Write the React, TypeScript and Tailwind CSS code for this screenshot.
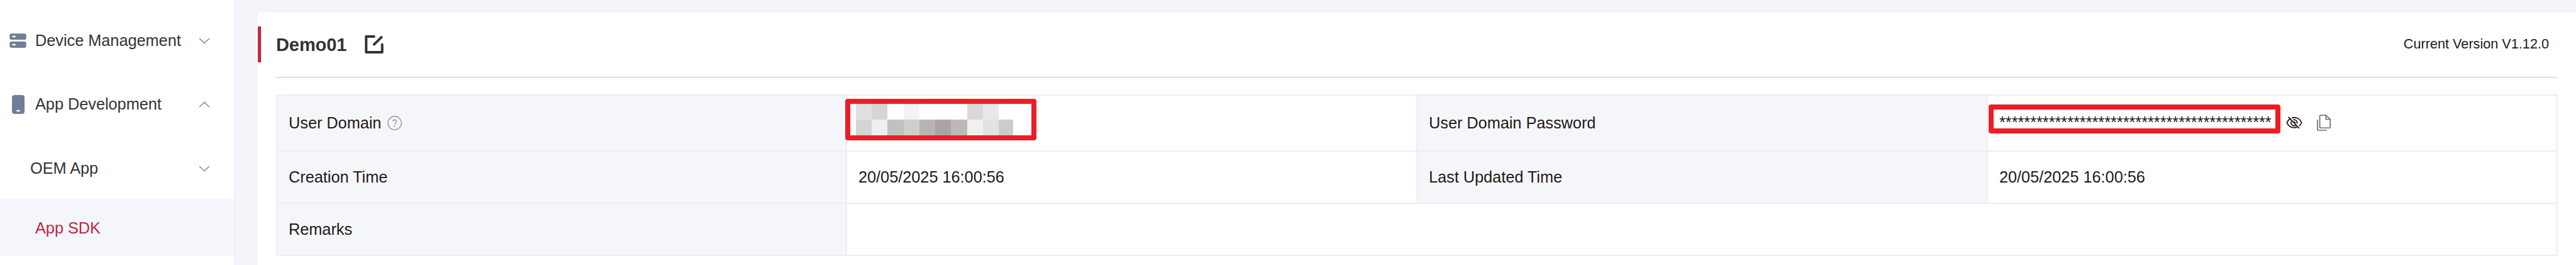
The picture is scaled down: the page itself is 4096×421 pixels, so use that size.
import type { ReactNode } from "react";

const topBlocks = [
  "bg-[#e1dfe0]", "bg-[#d6d5d3]", "bg-white", "bg-[#f3f3f3]", "bg-white",
  "bg-white", "bg-white", "bg-[#dad9d7]", "bg-[#e8e8e8]", "bg-white",
];
const bottomBlocks = [
  "bg-[#d5d3d4]", "bg-[#efefef]", "bg-[#c2c1bf]", "bg-[#cfcecc]", "bg-[#b9b4b3]",
  "bg-[#aaa5a4]", "bg-[#bdb8b7]", "bg-[#f0f0ee]", "bg-[#e3e1e2]", "bg-[#cdccca]",
];

function Chevron({ up = false }: { up?: boolean }) {
  return (
    <svg className="mt-[2px]" width="18" height="10" viewBox="0 0 18 10" fill="none" stroke="#7683a0" strokeWidth="1.4">
      <path d={up ? "M1 9 9 1.4 17 9" : "M1 1 9 8.6 17 1"} />
    </svg>
  );
}

function ServerIcon() {
  return (
    <svg className="mt-[2px]" width="27" height="23" viewBox="17 58.8 30 25.5">
      <rect x="17.3" y="59" width="29.4" height="11" rx="3.5" fill="#717e98" />
      <rect x="17.3" y="73.2" width="29.4" height="11" rx="3.5" fill="#717e98" />
      <rect x="21.7" y="63" width="6.3" height="2.8" rx="1.4" fill="#fff" />
      <rect x="21.7" y="77.4" width="6.3" height="2.8" rx="1.4" fill="#fff" />
    </svg>
  );
}

function PhoneIcon() {
  return (
    <svg className="mt-[2px]" width="20" height="30" viewBox="0 0 22 33">
      <rect width="22" height="33" rx="4.5" fill="#717e98" />
      <rect x="7.9" y="26" width="6.2" height="2.8" rx="1" fill="#fff" />
    </svg>
  );
}

function EditIcon() {
  return (
    <svg width="30" height="29" viewBox="0 0 33 32" fill="none" stroke="#333" strokeWidth="4.4" strokeLinecap="round" strokeLinejoin="round">
      <path d="M16.3 2.2H2.4V29.8H30.5V16.2" />
      <path d="M16.2 16.2 29.2 3.4" />
    </svg>
  );
}

function HelpIcon() {
  return (
    <svg width="23" height="23" viewBox="0 0 25 25" fill="none" stroke="#999" strokeWidth="1.5">
      <circle cx="12.5" cy="12.5" r="11.7" />
      <path d="M9.3 9.9C9.3 8 10.6 6.8 12.5 6.8s3.2 1.2 3.2 2.9c0 2.4-3.2 2.6-3.2 5.5" />
      <path d="M12.5 17v2" strokeWidth="1.8" />
    </svg>
  );
}

function EyeOffIcon() {
  return (
    <svg width="26" height="20" viewBox="0 0 28 22" fill="none" stroke="#231815" strokeWidth="2">
      <path d="M8 3.4C4.8 4.8 2.6 7.6 1.2 11c2.4 5.6 7 8.6 12.6 8.6 1.8 0 3.6-.3 5.2-1" />
      <path d="M9.8 2.6C15.8.8 23.6 2.8 26.8 11c-1 2.3-2.3 4.1-4.2 5.6" />
      <path d="M9.3 8.2a5.3 5.3 0 0 0 7.2 7.3" />
      <path d="M12.4 5.8a5.3 5.3 0 0 1 6.4 6.6" />
      <path d="M13 9.6a2 2 0 0 1 2.4 2.4" />
      <path d="M3.8 1 22.8 20.8" />
    </svg>
  );
}

function CopyIcon() {
  return (
    <svg width="22" height="26" viewBox="0 0 24 28" fill="none" stroke="#6b6868" strokeWidth="1.8" strokeLinejoin="round">
      <path d="M5 1.9Q5 .9 6 .9H15.6L23.1 8V22Q23.1 23 22.1 23H6Q5 23 5 22Z" />
      <path d="M15.6.9V8H23.1" />
      <path d="M.9 8.8V26Q.9 27.1 2 27.1H17.6" />
    </svg>
  );
}

function Label({ children }: { children: ReactNode }) {
  return (
    <div className="flex items-center border-r-2 border-b-2 border-[#ebeef5] bg-[#f5f6fa] pb-px pl-[18px]">
      {children}
    </div>
  );
}

function Value({ children }: { children: ReactNode }) {
  return (
    <div className="relative flex items-center border-r-2 border-b-2 border-[#ebeef5] pb-px pl-[18px]">
      {children}
    </div>
  );
}

export default function App() {
  return (
    <div className="flex h-[421px] w-[4096px] overflow-hidden bg-[#f4f5fa] font-['Liberation_Sans',Arial,sans-serif] text-[25.28px] leading-[30px] whitespace-nowrap text-[#231815]">
      <nav className="h-full w-[374px] shrink-0 border-r-2 border-[#ebf0f8] bg-white pt-[13px] text-[#333]">
        <div className="flex h-[101px] items-center pl-[15px]">
          <ServerIcon />
          <span className="ml-[14px] w-[260px]">Device Management</span>
          <Chevron />
        </div>
        <div className="flex h-[102px] items-center pl-[19px]">
          <PhoneIcon />
          <span className="ml-[17px] w-[260px]">App Development</span>
          <Chevron up />
        </div>
        <div className="flex h-[100px] items-center pt-px pl-[48px]">
          <span className="w-[268px]">OEM App</span>
          <Chevron />
        </div>
        <div className="flex h-[90px] items-center bg-[#f5f6fc] pt-[2px] pl-[56px] text-[#c0273d]">App SDK</div>
      </nav>

      <main className="mt-5 ml-9 flex-1 bg-white">
        <header className="flex h-[102px] pt-[22px]">
          <div className="h-[57px] w-[5px] bg-[#c0273b]" />
          <div className="mr-[29px] ml-6 flex h-[80px] flex-1">
            <h1 className="mt-[11px] w-[141px] text-[28.9px] leading-[36px] font-bold text-[#333]">Demo01</h1>
            <div className="mt-[14px]">
              <EditIcon />
            </div>
            <span className="mt-[14px] mr-[14px] ml-auto text-[21.67px] leading-[28px]">Current Version V1.12.0</span>
          </div>
        </header>
        <div className="mr-[29px] ml-[29px] h-[2px] bg-[#dcdfe6]" />

        <section className="mt-[26px] ml-[29px] grid w-[3628px] grid-cols-[906px_907px_907px_906px] grid-rows-[89px_83px_83px] border-t-2 border-l-2 border-[#ebeef5]">
          <Label>
            <span>User Domain</span>
            <span className="ml-[10px]">
              <HelpIcon />
            </span>
          </Label>
          <Value>
            <div className="absolute top-[5px] -left-[3px] h-[66px] w-[304px] rounded-[4px] border-8 border-[#ee1c25] bg-white">
              <div className="flex h-[24.5px]">
                <div className="w-[8.8px] bg-[#fafbfd]" />
                {topBlocks.map((c, i) => (
                  <div key={i} className={`w-[25.28px] ${c}`} />
                ))}
              </div>
              <div className="flex h-[25.5px]">
                <div className="w-[8.8px]" />
                {bottomBlocks.map((c, i) => (
                  <div key={i} className={`${i === 9 ? "w-[22.6px]" : "w-[25.28px]"} ${c}`} />
                ))}
              </div>
            </div>
          </Value>
          <Label>User Domain Password</Label>
          <Value>
            <span className="w-[456px] pb-[2px]">{"*".repeat(44)}</span>
            <EyeOffIcon />
            <span className="ml-[23px]">
              <CopyIcon />
            </span>
            <div className="absolute top-[14px] left-[1px] h-[46px] w-[464px] rounded-[4px] border-8 border-[#ee1c25]" />
          </Value>

          <Label>Creation Time</Label>
          <Value>20/05/2025 16:00:56</Value>
          <Label>Last Updated Time</Label>
          <Value>20/05/2025 16:00:56</Value>

          <Label>Remarks</Label>
          <div className="col-span-3 border-r-2 border-b-2 border-[#ebeef5]" />
        </section>
      </main>
    </div>
  );
}
